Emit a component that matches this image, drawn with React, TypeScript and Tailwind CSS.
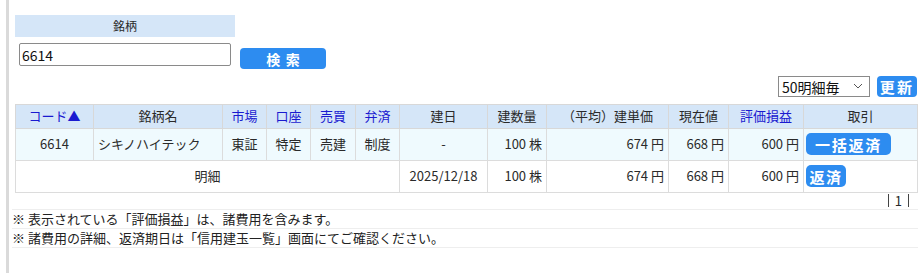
import { useState } from 'react';

const th = 'border border-[#d8d8d8] font-normal px-1 h-[24px]';
const td = 'border border-[#dcdcdc] px-1';

const App = () => {
  const [code, setCode] = useState('6614');
  const [per, setPer] = useState('50');

  return (
    <div
      className="flex min-h-[273px] bg-white text-[#2a2a2a] text-[13px]"
      style={{ fontFamily: '"Noto Sans CJK JP", "Noto Sans", sans-serif' }}
    >
      <div className="w-[7px]" />
      <div className="w-[3px] bg-[#dadada]" />
      <div className="flex-1 pl-[6px] pr-[3px] pt-[15px]">
        {/* Search */}
        <div className="w-[220px] h-[22px] bg-[#d5e6f8] flex items-center justify-center text-[12px]">
          銘柄
        </div>
        <div className="flex items-start mt-[6px]">
          <input
            value={code}
            onChange={(e) => setCode(e.target.value)}
            className="ml-[4px] w-[212px] h-[23px] border border-[#8a8a8a] rounded-[2px] px-[2px] text-[14px] text-[#111] outline-none"
          />
          <button className="ml-[9px] mt-[5px] w-[86px] h-[21px] rounded-[4px] bg-[#2d8cf0] text-white font-bold text-[14px] tracking-[0.4em] pl-[0.4em] leading-none">
            検索
          </button>
        </div>

        {/* Paging controls */}
        <div className="flex justify-end items-center mt-[7px] pr-[1px]">
          <div className="relative">
            <select
              value={per}
              onChange={(e) => setPer(e.target.value)}
              className="appearance-none w-[92px] h-[21px] border border-[#8a8a8a] pl-[3px] text-[14px] text-[#111] bg-white outline-none"
            >
              <option value="50">50明細毎</option>
              <option value="100">100明細毎</option>
            </select>
            <svg className="absolute right-[7px] top-[7px] pointer-events-none" width="10" height="6" viewBox="0 0 10 6">
              <path d="M1 1l4 4 4-4" fill="none" stroke="#555" strokeWidth="1" />
            </svg>
          </div>
          <button className="ml-[7px] w-[40px] h-[21px] rounded-[4px] bg-[#2d8cf0] text-white font-bold text-[15px] tracking-[0.15em] leading-none">
            更新
          </button>
        </div>

        {/* Table */}
        <table className="mt-[6px] w-[902px] border-collapse border border-[#cfcfcf] table-fixed">
          <colgroup>
            <col className="w-[78px]" />
            <col className="w-[129px]" />
            <col className="w-[44px]" />
            <col className="w-[44px]" />
            <col className="w-[45px]" />
            <col className="w-[44px]" />
            <col className="w-[88px]" />
            <col className="w-[59px]" />
            <col className="w-[122px]" />
            <col className="w-[60px]" />
            <col className="w-[75px]" />
            <col className="w-[114px]" />
          </colgroup>
          <thead>
            <tr className="bg-[#d5e6f8]">
              <th className={`${th} text-[#1a1ad0]`}>コード▲</th>
              <th className={th}>銘柄名</th>
              <th className={`${th} text-[#1a1ad0]`}>市場</th>
              <th className={`${th} text-[#1a1ad0]`}>口座</th>
              <th className={`${th} text-[#1a1ad0]`}>売買</th>
              <th className={`${th} text-[#1a1ad0]`}>弁済</th>
              <th className={th}>建日</th>
              <th className={th}>建数量</th>
              <th className={th}>（平均）建単価</th>
              <th className={th}>現在値</th>
              <th className={`${th} text-[#1a1ad0]`}>評価損益</th>
              <th className={th}>取引</th>
            </tr>
          </thead>
          <tbody>
            <tr className="bg-[#effafe] h-[32px]">
              <td className={`${td} text-center`}>6614</td>
              <td className={`${td} text-left`}>シキノハイテック</td>
              <td className={`${td} text-center`}>東証</td>
              <td className={`${td} text-center`}>特定</td>
              <td className={`${td} text-center`}>売建</td>
              <td className={`${td} text-center`}>制度</td>
              <td className={`${td} text-center`}>-</td>
              <td className={`${td} text-right`}>100 株</td>
              <td className={`${td} text-right`}>674 円</td>
              <td className={`${td} text-right`}>668 円</td>
              <td className={`${td} text-right`}>600 円</td>
              <td className={`${td} pl-[2px]`}>
                <button className="w-[85px] h-[22px] rounded-[5px] bg-[#2d8cf0] text-white font-bold text-[15px] tracking-[0.12em] leading-none">
                  一括返済
                </button>
              </td>
            </tr>
            <tr className="bg-white h-[32px]">
              <td colSpan={6} className={`${td} text-center`}>明細</td>
              <td className={`${td} text-center`}>2025/12/18</td>
              <td className={`${td} text-right`}>100 株</td>
              <td className={`${td} text-right`}>674 円</td>
              <td className={`${td} text-right`}>668 円</td>
              <td className={`${td} text-right`}>600 円</td>
              <td className={`${td} pl-[2px]`}>
                <button className="w-[40px] h-[22px] rounded-[5px] bg-[#2d8cf0] text-white font-bold text-[15px] tracking-[0.1em] leading-none">
                  返済
                </button>
              </td>
            </tr>
          </tbody>
        </table>

        {/* Pager */}
        <div className="flex justify-end h-[15px] mt-[1px] pr-[9px] text-[13px] leading-[13px]">
          <span className="border-l border-r border-[#444] h-[13px] px-[6px]">1</span>
        </div>

        {/* Notes */}
        <div className="text-[13px] leading-[18px] text-[#222] -ml-[3px]">
          <div className="border-t border-[#eeeeee]">※ 表示されている「評価損益」は、諸費用を含みます。</div>
          <div className="border-t border-b border-[#eeeeee]">※ 諸費用の詳細、返済期日は「信用建玉一覧」画面にてご確認ください。</div>
        </div>
      </div>
    </div>
  );
};

export default App;
